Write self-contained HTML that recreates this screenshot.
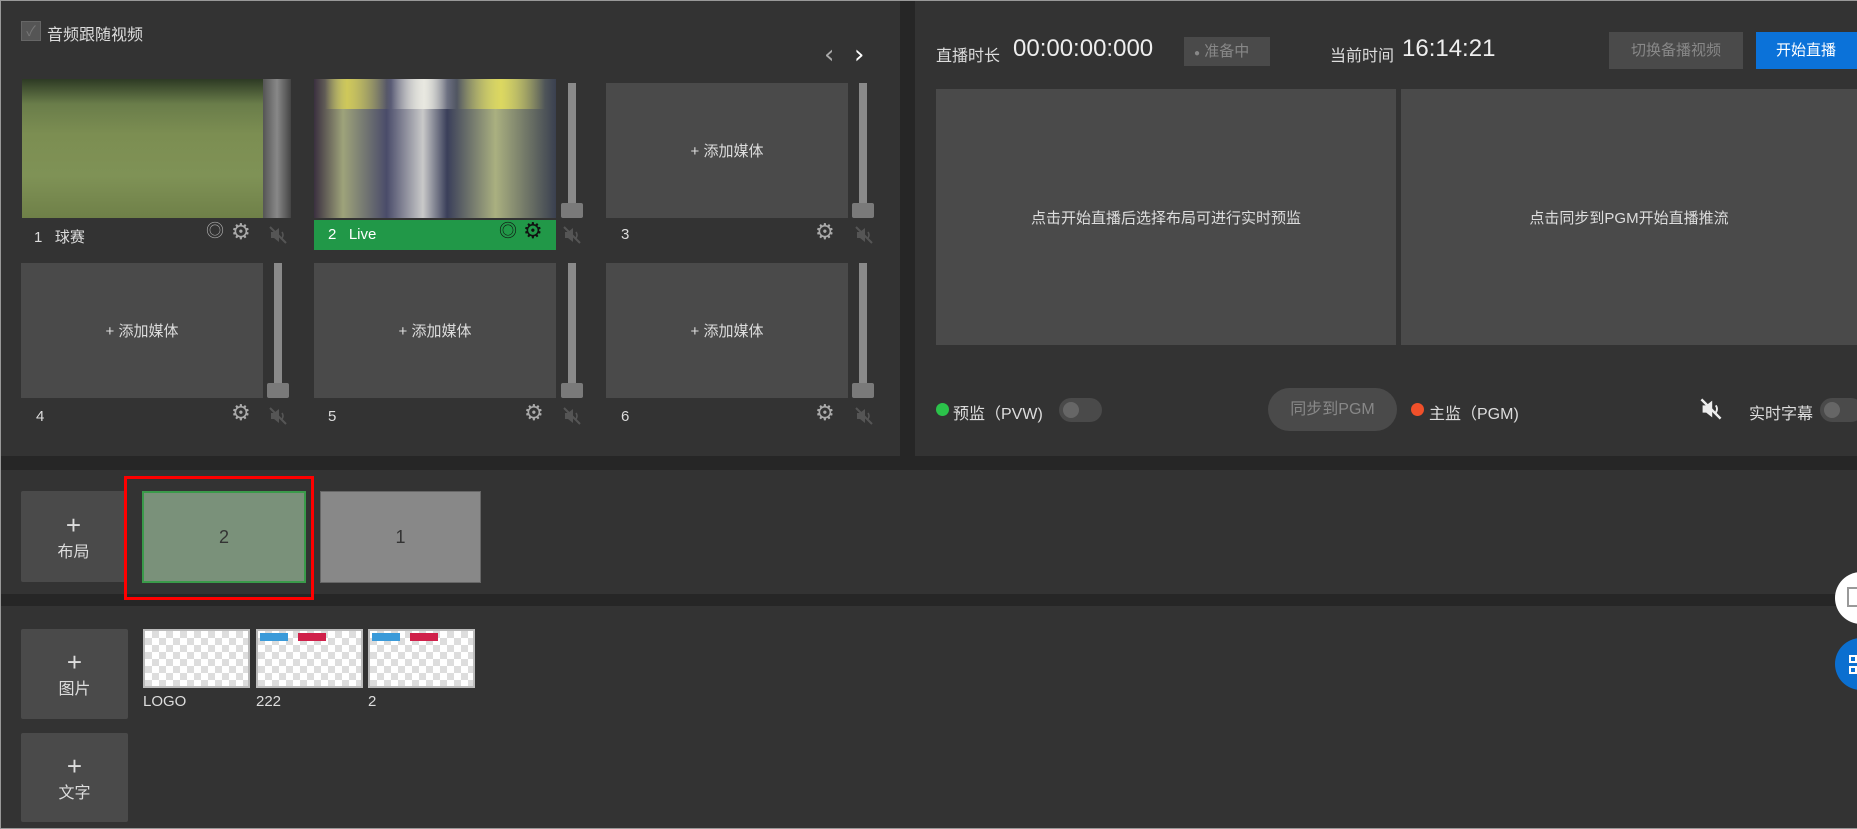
<!DOCTYPE html>
<html><head><meta charset="utf-8"><style>
*{margin:0;padding:0;box-sizing:border-box}
body{width:1857px;height:829px;background:#262626;position:relative;overflow:hidden;font-family:"Liberation Sans","Noto Sans CJK SC",sans-serif;color:#ddd}
.a{position:absolute}
.panel{background:#333}
.tile{background:#4a4a4a;display:flex;align-items:center;justify-content:center;font-size:15px;color:#ddd}
.track{background:#8a8a8a;width:8px}
.knob{background:#7a7a7a;width:22px;height:15px;border-radius:2px}
.lbl{font-size:15px;color:#ddd}
.gear{font-size:22px;color:#aaa;line-height:1}
.btn{background:#4a4a4a;display:flex;flex-direction:column;align-items:center;justify-content:center;font-size:16px;color:#ddd;border-radius:2px}
.btn b{font-size:26px;font-weight:normal;line-height:26px}
.chk{background:repeating-conic-gradient(#ddd 0 25%,#fff 0 50%) 0 0/14px 14px;border:2px solid #bbb}
.tog{background:#4a4a4a;border-radius:12px;height:24px;width:43px}
.tog i{position:absolute;left:4px;top:4px;width:16px;height:16px;border-radius:50%;background:#666}
</style></head><body>
<svg width="0" height="0" style="position:absolute"><defs><symbol id="m" viewBox="0 0 20 20"><path d="M3 7h3l5-4v14l-5-4H3z" fill="currentColor"/><path d="M2 2L18 18" stroke="currentColor" stroke-width="2"/><path d="M14 7q2 3 0 6" stroke="currentColor" stroke-width="1.6" fill="none"/></symbol></defs></svg>
<div class="a panel" style="left:1px;top:1px;width:899px;height:455px"></div>
<div class="a panel" style="left:915px;top:1px;width:942px;height:455px"></div>
<div class="a panel" style="left:1px;top:470px;width:1856px;height:124px"></div>
<div class="a panel" style="left:1px;top:606px;width:1856px;height:222px"></div>
<div class="a" style="left:0;top:0;width:1857px;height:1px;background:#999"></div>
<div class="a" style="left:0;top:0;width:1px;height:829px;background:#999"></div>
<div class="a" style="left:0;top:828px;width:1857px;height:1px;background:#999"></div>

<div class="a" style="left:21px;top:21px;width:20px;height:20px;background:#555;border:1px solid #666;color:#777;font-size:14px;text-align:center;line-height:18px">✓</div>
<div class="a lbl" style="left:47px;top:21px;font-size:16px">音频跟随视频</div>
<div class="a" style="left:824px;top:40px;font-size:26px;color:#aaa;font-family:'DejaVu Sans'">‹</div>
<div class="a" style="left:854px;top:40px;font-size:26px;color:#fff;font-family:'DejaVu Sans'">›</div>

<div class="a" style="left:22px;top:79px;width:241px;height:139px;background:linear-gradient(180deg,#2d3a24 0%,#6a7d4a 18%,#7c8e52 40%,#7f9256 70%,#6f8048 100%)"></div>
<div class="a" style="left:263px;top:79px;width:28px;height:139px;background:linear-gradient(90deg,#555,#888,#444)"></div>
<div class="a" style="left:314px;top:79px;width:242px;height:139px;background:linear-gradient(90deg,#3b3040 0%,#9ea37a 12%,#4a4c6a 30%,#c9c9c9 45%,#3a3f5a 55%,#aab080 75%,#3a4050 100%)"></div>
<div class="a" style="left:325px;top:79px;width:220px;height:30px;background:linear-gradient(90deg,transparent 0,#cfc85a 10%,transparent 30%,#e8e8e0 45%,transparent 60%,#dcd860 80%,transparent)"></div>
<div class="a tile" style="left:606px;top:83px;width:242px;height:135px">+ 添加媒体</div>
<div class="a track" style="left:568px;top:83px;height:125px"></div><div class="a knob" style="left:561px;top:203px"></div>
<div class="a track" style="left:859px;top:83px;height:125px"></div><div class="a knob" style="left:852px;top:203px"></div>

<div class="a lbl" style="left:34px;top:226px">1&nbsp;&nbsp;&nbsp;球赛</div>
<div class="a gear" style="left:206px;top:222px;font-size:18px">◎</div>
<div class="a gear" style="left:231px;top:221px">⚙</div>
<svg class="a" style="left:268px;top:225px;color:#555" width="20" height="20"><use href="#m"/></svg>
<div class="a" style="left:314px;top:220px;width:242px;height:30px;background:#219848"></div>
<div class="a lbl" style="left:328px;top:226px;color:#fff">2&nbsp;&nbsp;&nbsp;Live</div>
<div class="a gear" style="left:499px;top:222px;font-size:18px;color:#111">◎</div>
<div class="a gear" style="left:523px;top:220px;color:#111">⚙</div>
<svg class="a" style="left:562px;top:225px;color:#555" width="20" height="20"><use href="#m"/></svg>
<div class="a lbl" style="left:621px;top:226px">3</div>
<div class="a gear" style="left:815px;top:221px">⚙</div>
<svg class="a" style="left:854px;top:225px;color:#555" width="20" height="20"><use href="#m"/></svg>

<div class="a tile" style="left:21px;top:263px;width:242px;height:135px">+ 添加媒体</div>
<div class="a tile" style="left:314px;top:263px;width:242px;height:135px">+ 添加媒体</div>
<div class="a tile" style="left:606px;top:263px;width:242px;height:135px">+ 添加媒体</div>
<div class="a track" style="left:274px;top:263px;height:125px"></div><div class="a knob" style="left:267px;top:383px"></div>
<div class="a track" style="left:568px;top:263px;height:125px"></div><div class="a knob" style="left:561px;top:383px"></div>
<div class="a track" style="left:859px;top:263px;height:125px"></div><div class="a knob" style="left:852px;top:383px"></div>
<div class="a lbl" style="left:36px;top:408px">4</div>
<div class="a gear" style="left:231px;top:402px">⚙</div>
<svg class="a" style="left:268px;top:406px;color:#555" width="20" height="20"><use href="#m"/></svg>
<div class="a lbl" style="left:328px;top:408px">5</div>
<div class="a gear" style="left:524px;top:402px">⚙</div>
<svg class="a" style="left:562px;top:406px;color:#555" width="20" height="20"><use href="#m"/></svg>
<div class="a lbl" style="left:621px;top:408px">6</div>
<div class="a gear" style="left:815px;top:402px">⚙</div>
<svg class="a" style="left:854px;top:406px;color:#555" width="20" height="20"><use href="#m"/></svg>

<div class="a lbl" style="left:936px;top:42px;font-size:16px">直播时长</div>
<div class="a" style="left:1013px;top:35px;font-size:24px;color:#eee">00:00:00:000</div>
<div class="a" style="left:1184px;top:37px;width:86px;height:29px;background:#4a4a4a;color:#888;font-size:15px;line-height:29px;padding-left:10px"><span style="font-size:10px">●</span> 准备中</div>
<div class="a lbl" style="left:1330px;top:42px;font-size:16px">当前时间</div>
<div class="a" style="left:1402px;top:35px;font-size:24px;color:#eee">16:14:21</div>
<div class="a" style="left:1609px;top:32px;width:134px;height:37px;background:#4a4a4a;color:#888;font-size:15px;text-align:center;line-height:37px">切换备播视频</div>
<div class="a" style="left:1756px;top:32px;width:101px;height:37px;background:#0b72d9;color:#fff;font-size:15px;line-height:37px;padding-left:20px">开始直播</div>
<div class="a tile" style="left:936px;top:89px;width:460px;height:256px">点击开始直播后选择布局可进行实时预监</div>
<div class="a tile" style="left:1401px;top:89px;width:456px;height:256px">点击同步到PGM开始直播推流</div>
<div class="a" style="left:936px;top:403px;width:13px;height:13px;border-radius:50%;background:#2bc24a"></div>
<div class="a lbl" style="left:953px;top:400px;font-size:16px">预监（PVW)</div>
<div class="a tog" style="left:1059px;top:398px"><i></i></div>
<div class="a" style="left:1268px;top:388px;width:129px;height:43px;border-radius:22px;background:#4a4a4a;color:#888;font-size:16px;text-align:center;line-height:43px">同步到PGM</div>
<div class="a" style="left:1411px;top:403px;width:13px;height:13px;border-radius:50%;background:#f0502a"></div>
<div class="a lbl" style="left:1429px;top:400px;font-size:16px">主监（PGM)</div>
<svg class="a" style="left:1699px;top:397px;color:#eee" width="24" height="24"><use href="#m"/></svg>
<div class="a lbl" style="left:1749px;top:400px;font-size:16px">实时字幕</div>
<div class="a tog" style="left:1820px;top:398px"><i></i></div>

<div class="a btn" style="left:21px;top:491px;width:105px;height:91px"><b>+</b>布局</div>
<div class="a" style="left:124px;top:476px;width:190px;height:124px;border:3px solid #f00"></div>
<div class="a" style="left:142px;top:491px;width:164px;height:92px;background:#7a917a;border:2px solid #3a9a4a;color:#333;font-size:18px;text-align:center;line-height:88px">2</div>
<div class="a" style="left:320px;top:491px;width:161px;height:92px;background:#888;border:1px solid #666;color:#333;font-size:18px;text-align:center;line-height:90px">1</div>

<div class="a btn" style="left:21px;top:629px;width:107px;height:90px"><b>+</b>图片</div>
<div class="a btn" style="left:21px;top:733px;width:107px;height:89px"><b>+</b>文字</div>
<div class="a chk" style="left:143px;top:629px;width:107px;height:59px"></div>
<div class="a chk" style="left:256px;top:629px;width:107px;height:59px"><div class="a" style="left:2px;top:2px;width:28px;height:8px;background:#3a9ad9"></div><div class="a" style="left:40px;top:2px;width:28px;height:8px;background:#d0204a"></div></div>
<div class="a chk" style="left:368px;top:629px;width:107px;height:59px"><div class="a" style="left:2px;top:2px;width:28px;height:8px;background:#3a9ad9"></div><div class="a" style="left:40px;top:2px;width:28px;height:8px;background:#d0204a"></div></div>
<div class="a lbl" style="left:143px;top:693px">LOGO</div>
<div class="a lbl" style="left:256px;top:693px">222</div>
<div class="a lbl" style="left:368px;top:693px">2</div>

<div class="a" style="left:1835px;top:572px;width:52px;height:52px;border-radius:50%;background:#fff"></div>
<div class="a" style="left:1847px;top:587px;width:10px;height:20px;border:2px solid #999;border-right:none"></div>
<div class="a" style="left:1835px;top:638px;width:52px;height:52px;border-radius:50%;background:#0b6fd0"></div>
<div class="a" style="left:1849px;top:655px;width:8px;height:8px;border:2px solid #fff"></div>
<div class="a" style="left:1849px;top:666px;width:8px;height:8px;border:2px solid #fff"></div>
</body></html>
